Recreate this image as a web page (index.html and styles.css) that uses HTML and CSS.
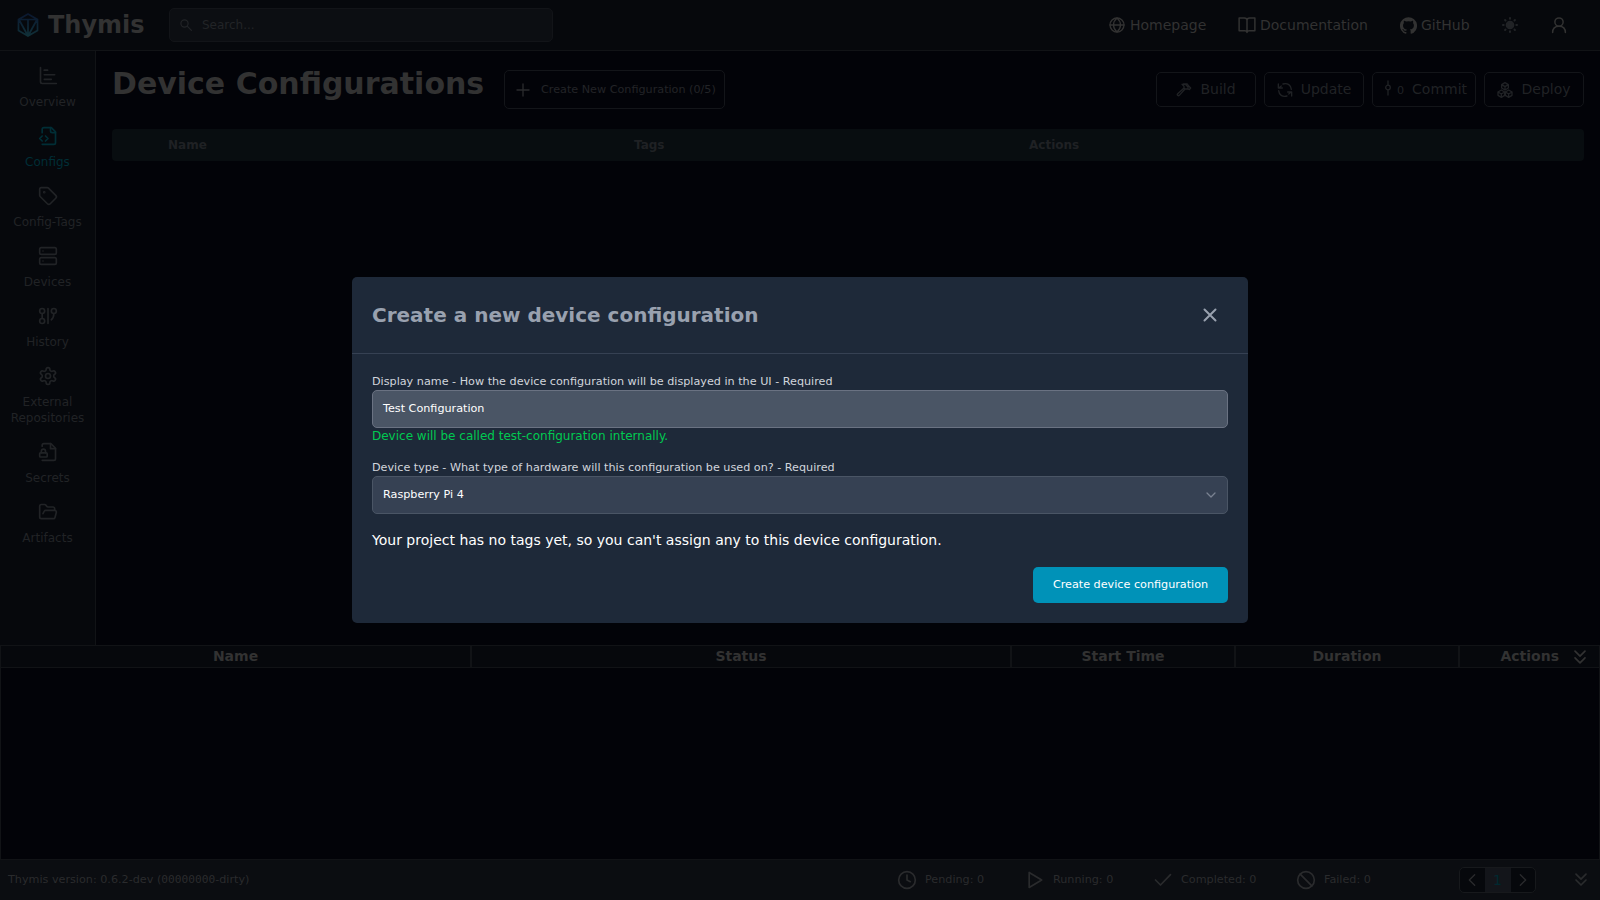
FILE: index.html
```html
<!DOCTYPE html>
<html lang="en">
<head>
<meta charset="utf-8">
<title>Thymis</title>
<link rel="stylesheet" href="styles.css">
</head>
<body>
<div class="app">
  <header class="topbar">
    <svg class="logo" viewBox="0 0 22 24"><defs><linearGradient id="lg" x1="0" y1="0" x2="0" y2="1"><stop offset="0" stop-color="#0b1830"/><stop offset="1" stop-color="#103038"/></linearGradient></defs><path d="M11 1 20.500 6.500V17.500L11 23 1.500 17.500V6.500ZM1.500 6.500H20.500M11 6.500V23M2.500 7.500 11 23 19.500 7.500"/></svg>
    <span class="brand">Thymis</span>
    <div class="search">
      <svg class="i12" viewBox="0 0 20 20"><circle cx="7.500" cy="7.500" r="6"/><path d="m12 12 7 7"/></svg>
      <span>Search...</span>
    </div>
    <nav class="links">
      <a class="home"><svg class="i16" viewBox="0 0 24 24"><circle cx="12" cy="12" r="10.500"/><path d="M1.500 12h21M12 1.500c-7 6-7 15 0 21M12 1.500c7 6 7 15 0 21"/></svg>Homepage</a>
      <a class="docs"><svg class="i18" viewBox="0 0 24 24"><path d="M12 5.500V22M12 5.500C12 4 11 2.500 8.500 2.500H1.500V19.500H9c2 0 3 1 3 2.500 0-1.500 1-2.500 3-2.500h7.500v-17h-7C13 2.500 12 4 12 5.500"/></svg>Documentation</a>
      <a class="gh"><svg class="i17 solid" viewBox="0 0 24 24"><path d="M12 .3a12 12 0 0 0-3.800 23.400c.6.100.8-.3.8-.6v-2c-3.300.7-4-1.600-4-1.600-.6-1.400-1.400-1.800-1.400-1.800-1-.7.1-.7.1-.7 1.200 0 1.900 1.200 1.900 1.200 1 1.800 2.800 1.300 3.500 1 0-.8.400-1.300.7-1.600-2.700-.3-5.500-1.300-5.500-6 0-1.200.5-2.300 1.300-3.100-.2-.4-.6-1.600 0-3.200 0 0 1-.3 3.400 1.200a11.500 11.500 0 0 1 6 0c2.300-1.500 3.300-1.200 3.300-1.200.6 1.600.2 2.800 0 3.200.9.800 1.300 1.900 1.300 3.200 0 4.600-2.800 5.600-5.500 5.900.5.400.9 1 .9 2.200v3.300c0 .3.100.7.800.6A12 12 0 0 0 12 .3"/></svg>GitHub</a>
      <svg class="i16 sun" viewBox="0 0 24 24"><circle cx="12" cy="12" r="5.500" fill="currentColor"/><path stroke-width="3" d="M12 1.500v1M12 21.500v1M1.500 12h1M21.500 12h1M4.600 4.600l.7.7M18.700 18.700l.7.7M4.600 19.400l.7-.7M18.700 5.300l.7-.7"/></svg>
      <svg class="i18 user" viewBox="0 0 24 24"><circle cx="12" cy="8" r="5.500"/><path d="M3.500 22c0-5.500 3.500-8.500 8.500-8.500s8.500 3 8.500 8.500"/></svg>
    </nav>
  </header>

  <div class="middle">
    <aside class="sidebar">
      <a><svg class="i20" viewBox="0 0 24 24"><path d="M3 2v17a2 2 0 0 0 2 2h17M7.500 5h4M7.500 10.500H20M7.500 16H16"/></svg>Overview</a>
      <a class="active"><svg class="i20" viewBox="0 0 24 24"><path d="M5 22h14a2 2 0 0 0 2-2V7l-5-5H7a2 2 0 0 0-2 2v4"/><path d="M15 2v4a2 2 0 0 0 2 2h4M5 12l-3 3 3 3M9 18l3-3-3-3"/></svg>Configs</a>
      <a><svg class="i20" viewBox="0 0 24 24"><path d="M12.586 2.586A2 2 0 0 0 11.172 2H4a2 2 0 0 0-2 2v7.172a2 2 0 0 0 .586 1.414l8.704 8.704a2.426 2.426 0 0 0 3.420 0l6.580-6.580a2.426 2.426 0 0 0 0-3.420z"/><circle cx="7.500" cy="7.500" r=".6"/></svg>Config-Tags</a>
      <a><svg class="i20" viewBox="0 0 24 24"><rect x="2" y="2" width="20" height="8" rx="2"/><rect x="2" y="14" width="20" height="8" rx="2"/><path d="M6 6h.01M6 18h.01"/></svg>Devices</a>
      <a><svg class="i20" viewBox="0 0 24 24"><circle cx="5" cy="6" r="3"/><circle cx="5" cy="18" r="3"/><path d="M5 9v6M12 3v18"/><circle cx="19" cy="6" r="3"/><path d="M19 9c0 4-1 6-3 7.500"/></svg>History</a>
      <a><svg class="i20" viewBox="0 0 24 24"><path d="M12.220 2h-.44a2 2 0 0 0-2 2v.18a2 2 0 0 1-1 1.730l-.43.25a2 2 0 0 1-2 0l-.15-.08a2 2 0 0 0-2.730.73l-.22.38a2 2 0 0 0 .73 2.730l.15.100a2 2 0 0 1 1 1.720v.51a2 2 0 0 1-1 1.740l-.15.090a2 2 0 0 0-.73 2.730l.22.380a2 2 0 0 0 2.730.730l.15-.080a2 2 0 0 1 2 0l.43.250a2 2 0 0 1 1 1.730V20a2 2 0 0 0 2 2h.44a2 2 0 0 0 2-2v-.18a2 2 0 0 1 1-1.730l.43-.25a2 2 0 0 1 2 0l.15.080a2 2 0 0 0 2.730-.73l.22-.39a2 2 0 0 0-.73-2.730l-.15-.08a2 2 0 0 1-1-1.740v-.5a2 2 0 0 1 1-1.740l.15-.09a2 2 0 0 0 .73-2.730l-.22-.38a2 2 0 0 0-2.730-.73l-.15.080a2 2 0 0 1-2 0l-.43-.25a2 2 0 0 1-1-1.730V4a2 2 0 0 0-2-2z"/><circle cx="12" cy="12" r="3"/></svg>External<br>Repositories</a>
      <a><svg class="i20" viewBox="0 0 24 24"><path d="M5 5V4a2 2 0 0 1 2-2h8.500L21 7.500V20a2 2 0 0 1-2 2H5"/><path d="M15 2v6h6"/><rect x="2" y="13" width="9" height="5" rx="1"/><path d="M9 13v-2a2.500 2.500 0 0 0-5 0v2"/></svg>Secrets</a>
      <a><svg class="i20" viewBox="0 0 24 24"><path d="m6 14 1.450-2.900A2 2 0 0 1 9.240 10H20a2 2 0 0 1 1.940 2.500l-1.550 6a2 2 0 0 1-1.940 1.500H4a2 2 0 0 1-2-2V5c0-1.100.9-2 2-2h3.930a2 2 0 0 1 1.660.9l.82 1.200a2 2 0 0 0 1.660.9H18a2 2 0 0 1 2 2v2"/></svg>Artifacts</a>
    </aside>
    <main class="main">
      <div class="head">
        <h1>Device Configurations</h1>
        <button class="new"><svg class="i18" viewBox="0 0 24 24"><path d="M12 4v16M4 12h16"/></svg>Create New Configuration (0/5)</button>
        <div class="acts">
          <button><svg class="i16" viewBox="0 0 24 24"><path d="m13.500 10.500-8.500 9.500a1.700 1.700 0 0 1-2.500-2.500L12 9M9 3.500h5l4 4v3l2 1 2-2.500-3-3-2-3h-6M9 3.500l3 3V9l1.500 1.500H18"/></svg>Build</button>
          <button><svg class="i16" viewBox="0 0 24 24"><path d="M2 3v6h6M22 21v-6h-6M3 9c1-1.500 2-2 3.500-3M9 3c7-2 12 2 12.500 8M21 15c-1 1.500-2 2-3.500 3M15 21c-7 2-12-2-12.500-8"/></svg>Update</button>
          <button class="commit"><svg class="ci" viewBox="0 0 8 16"><path d="M4 1v4M4 10v5"/><circle cx="4" cy="7.500" r="2.300"/></svg><small>0</small>Commit</button>
          <button class="deploy"><svg class="i16" viewBox="0 0 24 24"><path d="M12 1l5 3v5l-5 3-5-3V4zM7 4l5 3 5-3M12 7v5M6.500 12l5 3v5l-5 3-5-3v-5zM1.500 15l5 3 5-3M6.500 18v5M17.500 12l5 3v5l-5 3-5-3v-5zM12.500 15l5 3 5-3M17.500 18v5"/></svg>Deploy</button>
        </div>
      </div>
      <div class="thead"><span>Name</span><span>Tags</span><span>Actions</span></div>
    </main>
  </div>

  <section class="jobs">
    <div class="jobhead"><b>Name</b><b>Status</b><b>Start Time</b><b>Duration</b><b class="last">Actions<svg class="i20" viewBox="0 0 24 24"><path d="m6 5 6 6 6-6M6 13l6 6 6-6"/></svg></b></div>
  </section>

  <footer class="foot">
    <span class="ver">Thymis version: 0.6.2-dev (<code>00000000</code>-dirty)</span>
    <span class="st s1"><svg class="i20" viewBox="0 0 24 24"><circle cx="12" cy="12" r="10"/><path d="M12 6v6l4 2"/></svg>Pending: 0</span>
    <span class="st s2"><svg class="i20" viewBox="0 0 24 24"><path d="M5 3v18l15-9z"/></svg>Running: 0</span>
    <span class="st s3"><svg class="i20" viewBox="0 0 24 24"><path d="m3 12 6 6L21 5.500"/></svg>Completed: 0</span>
    <span class="st s4"><svg class="i20" viewBox="0 0 24 24"><circle cx="12" cy="12" r="10"/><path d="m5 5 14 14"/></svg>Failed: 0</span>
    <div class="pager"><span><svg class="i16" viewBox="0 0 24 24"><path d="m16 4-8 8 8 8"/></svg></span><span class="cur">1</span><span><svg class="i16" viewBox="0 0 24 24"><path d="m8 4 8 8-8 8"/></svg></span></div>
    <svg class="i20 dbl" viewBox="0 0 24 24"><path d="m6 5 6 6 6-6M6 12l6 6 6-6"/></svg>
  </footer>
</div>

<div class="overlay">
  <div class="modal">
    <div class="mhead"><h3>Create a new device configuration</h3><svg class="close" viewBox="0 0 14 14"><path d="m1.500 1.500 11 11m0-11-11 11"/></svg></div>
    <div class="mbody">
      <label>Display name - How the device configuration will be displayed in the UI - Required</label>
      <div class="field focus">Test Configuration</div>
      <p class="help">Device will be called test-configuration internally.</p>
      <label>Device type - What type of hardware will this configuration be used on? - Required</label>
      <div class="field">Raspberry Pi 4<svg class="caret" viewBox="0 0 10 6"><path d="m1 1 4 4 4-4"/></svg></div>
      <p class="note">Your project has no tags yet, so you can't assign any to this device configuration.</p>
      <div class="mfoot"><button class="primary">Create device configuration</button></div>
    </div>
  </div>
</div>
</body>
</html>
```

FILE: styles.css
```css
* { box-sizing: border-box; margin: 0; padding: 0; }
body { width: 1600px; height: 900px; overflow: hidden; background: #020308; font-family: "DejaVu Sans", sans-serif; font-size: 14px; color: #323232; }
button { font: inherit; color: inherit; background: none; border: 0; }
svg { flex: none; fill: none; stroke: currentColor; stroke-width: 2; stroke-linecap: round; stroke-linejoin: round; }
svg.solid { fill: currentColor; stroke: none; }
.i12 { width: 12px; height: 12px; }
.i16 { width: 16px; height: 16px; }
.i17 { width: 17px; height: 17px; }
.i18 { width: 18px; height: 18px; }
.i20 { width: 20px; height: 20px; }

.app { display: flex; flex-direction: column; height: 900px; }
.topbar { height: 51px; flex: none; display: flex; align-items: center; padding-left: 17px; background: #06080c; border-bottom: 1px solid #111316; }
.logo { width: 22px; height: 24px; stroke: url(#lg); stroke-width: 1.7; }
.brand { margin-left: 9px; width: 121px; font-size: 24px; font-weight: 700; line-height: 28px; }
.search { width: 384px; height: 34px; display: flex; align-items: center; gap: 10px; padding-left: 10px; font-size: 12px; color: #222427; background: #0c0e12; border: 1px solid #121418; border-radius: 5px; }
.links { flex: 1; display: flex; align-items: center; }
.links a { display: flex; align-items: center; gap: 4px; }
.links .home { margin-left: 556px; width: 129px; gap: 5px; }
.docs { width: 162px; }
.gh { width: 102px; }
.sun { color: #212326; margin-right: 32px; }

.middle { height: 594px; flex: none; display: flex; }
.sidebar { width: 96px; flex: none; padding-top: 7px; background: #06080c; border-right: 1px solid #111316; color: #212326; }
.sidebar a { display: flex; flex-direction: column; align-items: center; padding: 8px 0; font-size: 12px; line-height: 16px; text-align: center; }
.sidebar a svg { margin-bottom: 8px; }
.sidebar .active { color: #002e36; }
.main { flex: 1; padding: 15px 16px 0; }
.head { display: flex; height: 63px; align-items: flex-start; }
h1 { width: 392px; font-size: 30px; line-height: 36px; white-space: nowrap; }
.new { margin-top: 4px; width: 221px; height: 39px; display: flex; align-items: center; gap: 9px; padding-left: 9px; font-size: 11.2px; color: #222427; border: 1px solid #131519; border-radius: 5px; white-space: nowrap; }
.new svg { stroke-width: 1.800; color: #2a2b2d; }
.acts { margin: 6px 0 0 auto; display: flex; gap: 8px; color: #202225; }
.acts button { width: 100px; height: 35px; display: flex; align-items: center; justify-content: center; gap: 8px; padding-bottom: 2px; border: 1px solid #131519; border-radius: 5px; }
.acts button svg { position: relative; top: 1px; }
.acts .commit { width: 104px; gap: 0; padding-left: 3px; }
.acts .ci { width: 8px; height: 16px; stroke-width: 1.3; margin: -4px 5px 0 0; }
.commit small { font-size: 11.2px; margin: 4px 8px 0 0; }
.thead { height: 32px; display: flex; align-items: center; padding-left: 56px; font-size: 12px; font-weight: 700; color: #1f2124; background: #080d10; border-radius: 4px; }
.thead span:nth-child(1) { width: 466px; }
.thead span:nth-child(2) { width: 395px; }

.jobs { flex: 1; border: 1px solid #111316; border-bottom: 0; }
.jobhead { height: 22px; display: grid; grid-template-columns: 471px 540px 224px 224px 1fr; background: #06080c; border-bottom: 1px solid #111316; line-height: 21px; text-align: center; }
.jobhead b { border-right: 2px solid #111316; }
.jobhead .last { border: 0; display: flex; align-items: center; justify-content: flex-end; gap: 11px; padding-right: 9px; }

.foot { height: 41px; flex: none; display: flex; align-items: center; padding: 0 0 1px 8px; font-size: 11.2px; color: #2a2b2d; background: #0b0d11; border-top: 1px solid #111316; }
.foot svg { position: relative; top: .5px; }
.ver { width: 889px; }
.ver code { font-family: "DejaVu Sans Mono", monospace; font-size: 11.2px; }
.st { display: flex; align-items: center; gap: 8px; }
.s1 { width: 128px; }
.s2 { width: 128px; }
.s3 { width: 143px; }
.s4 { width: 163px; }
.pager { width: 77px; height: 26px; display: flex; border: 1px solid #17191c; border-radius: 5px; background: #06080c; overflow: hidden; }
.pager span { flex: 1; display: flex; align-items: center; justify-content: center; }
.pager .cur { flex: 0 0 26px; font-size: 14px; color: #002930; background: #13151a; }
.dbl { margin-left: 35px; }

.overlay { position: absolute; inset: 0; display: flex; align-items: center; justify-content: center; }
.modal { width: 896px; height: 346px; background: #1e2939; border-radius: 5px; color: #fff; }
.mhead { height: 77px; display: flex; align-items: center; justify-content: space-between; padding: 0 31px 0 20px; border-bottom: 1px solid #364153; color: #99a1af; }
h3 { font-size: 20px; line-height: 28px; }
.close { width: 14px; height: 14px; stroke-width: 2; }
.mbody { padding: 20px; }
label { display: block; font-size: 11.2px; line-height: 16px; color: #d1d5dc; }
.field { height: 38px; display: flex; align-items: center; justify-content: space-between; padding: 0 11px 2px 10px; font-size: 11.2px; background: #364153; border: 1px solid #4a5565; border-radius: 5px; }
.field.focus { background: #4a5565; border-color: #6a7282; }
.caret { width: 10px; height: 6px; color: #7a8291; stroke-width: 1.300; margin-top: 2px; }
.help { font-size: 12px; line-height: 16px; color: #00c951; margin-bottom: 16px; }
.note { font-size: 14px; line-height: 20px; margin-top: 16px; }
.mfoot { display: flex; justify-content: flex-end; margin-top: 17px; }
.primary { width: 195px; height: 36px; padding-bottom: 2px; font-size: 11.2px; color: #fff; background: #0092b8; border-radius: 5px; }
```
